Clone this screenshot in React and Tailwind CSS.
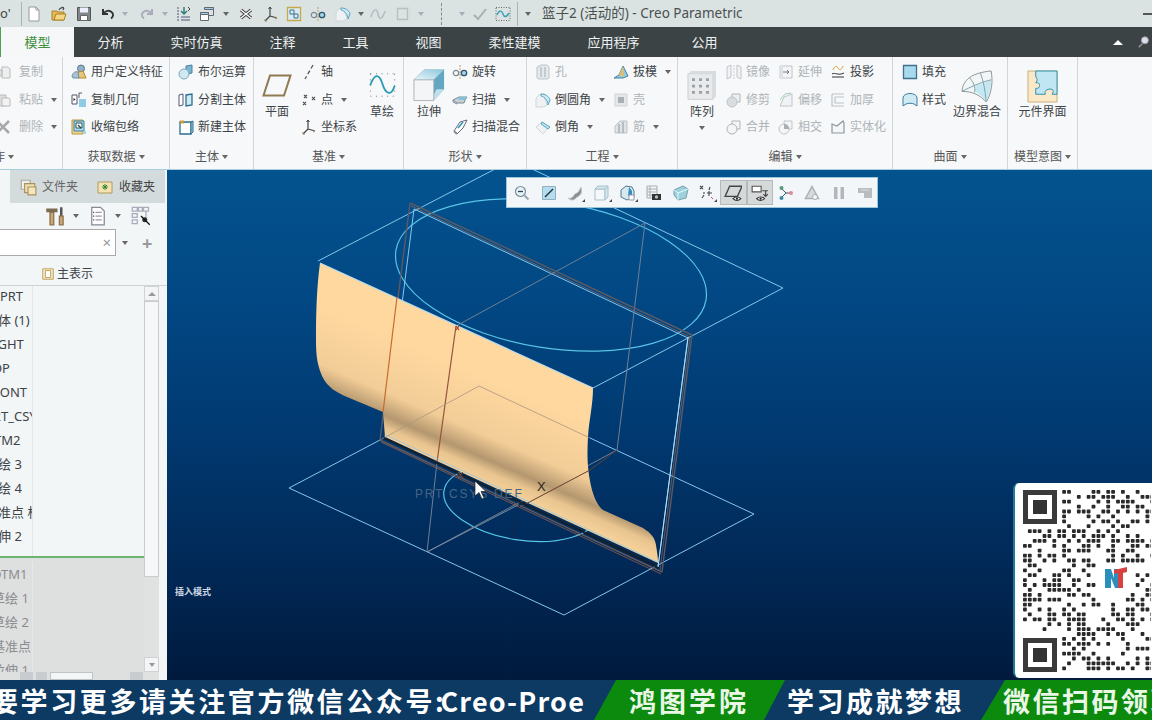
import React from "react";

const Ic = ({ s = 16, children, className = "" }) => (
  <svg width={s} height={s} viewBox="0 0 16 16" fill="none" className={"shrink-0 " + className}>
    {children}
  </svg>
);

const Caret = ({ className = "" }) => (
  <span className={"inline-block h-0 w-0 shrink-0 border-x-[3.5px] border-t-[4px] border-x-transparent border-t-[#666] " + className} />
);

// title bar icons
const NewDoc = () => <Ic><path d="M3 1h7l3 3v11H3z" fill="#fff" stroke="#999" /><path d="M10 1v3h3" stroke="#999" /></Ic>;
const OpenDoc = () => <Ic><path d="M1 5h5l1 1h6v8H1z" fill="#e6b94e" stroke="#a8822c" /><path d="M3 14l2-6h10l-2 6z" fill="#f5d67e" stroke="#a8822c" /><path d="M8 4c1-2 3-3 5-2m0 0l-2-1m2 1l-1 2" stroke="#444" strokeWidth="1.200" /></Ic>;
const SaveDoc = () => <Ic><path d="M1.500 1.500h13v13h-13z" fill="#7f868c" stroke="#555" /><path d="M4 1.500h8v5H4z" fill="#eef" /><path d="M4.500 9.500h7v5h-7z" fill="#fff" stroke="#666" /></Ic>;
const Undo = ({ c = "#333" }) => <Ic><path d="M3 3v5h5" stroke={c} strokeWidth="2" /><path d="M3.500 8C5 4.500 10 3.500 12.500 7c1 1.500 .5 4-1.500 5.500" stroke={c} strokeWidth="2" /></Ic>;
const Redo = ({ c = "#aab" }) => <Ic><path d="M13 3v5H8" stroke={c} strokeWidth="2" /><path d="M12.500 8C11 4.500 6 3.500 3.500 7c-1 1.500-.5 4 1.500 5.500" stroke={c} strokeWidth="2" /></Ic>;
const Regen = () => <Ic><path d="M1 2h2M1 5h2M1 8h2M1 11h2M1 14h2M5 11h9M5 14h9" stroke="#557" /><path d="M8 1v7M5 5l3 3 3-3" stroke="#2f7f7f" strokeWidth="1.500" /><path d="M12 1l2 2-2 2" stroke="#444" /></Ic>;
const Windows = () => <Ic><path d="M1.500 6.500h8v8h-8z" fill="#fff" stroke="#667" /><path d="M5.500 1.500h9v8h-5" stroke="#667" /><path d="M1.500 6.500h8v2h-8zM5.500 1.500h9v2h-9z" fill="#9fd0e0" stroke="#667" /></Ic>;
const CloseX = () => <Ic><path d="M3 4l10 8M13 4L3 12" stroke="#444" strokeWidth="3.500" /><path d="M3 4l10 8M13 4L3 12" stroke="#fff" strokeWidth="1.300" /></Ic>;
const Csys = ({ s = 16 }) => <Ic s={s}><path d="M7 1v9M7 10l7 2M7 10l-5 5" stroke="#444" strokeWidth="1.200" /><path d="M5.500 3L7 1l1.500 2" stroke="#444" /><path d="M2 13v2h2M12 11l2 1-2 1" stroke="#a86" /></Ic>;
const Image = () => <Ic><path d="M1.500 1.500h13v13h-13z" fill="#d9ecf5" stroke="#c9a84a" strokeWidth="1.300" /><path d="M4 4h4v4H4zM8 8h4v4H8z" stroke="#3f6e8e" /></Ic>;
const Revolve = () => <Ic><path d="M8 1v14" stroke="#c09a70" strokeDasharray="2 1" /><circle cx="4" cy="9" r="2.700" stroke="#7a8894" strokeWidth="1.200" /><circle cx="12" cy="9" r="2.700" fill="#9fd6e8" stroke="#33566c" strokeWidth="1.300" /></Ic>;
const Round = () => <Ic><path d="M1 15V8c0-3 3-6 6-6h3l-1 1 3 10-4 2z" fill="#eff2f4" stroke="#d0d6da" /><path d="M6 2c4 0 8 2 9 6l-2 5c0-4-3-8-7-9z" fill="#cfeaf3" stroke="#5aa4bf" /></Ic>;
const Curve = ({ c = "#b5bcc2" }) => <Ic><path d="M1 11C4 1 7 3 8 8s4 7 7-3" stroke={c} strokeWidth="1.500" /></Ic>;
const BoxDash = () => <Ic><path d="M2.500 2.500h10v11h-10z" stroke="#b8bec4" strokeWidth="1.400" /><path d="M5 1h10M15 1v10" stroke="#d4d8dc" strokeDasharray="2 1" /></Ic>;
const Check = () => <Ic><path d="M2 9l4 4 8-10" stroke="#a8afb5" strokeWidth="2" /></Ic>;
const DottedCurve = () => <Ic><path d="M1 2v12M15 2v12M1 1.500h14M1 14.500h14" stroke="#667" strokeDasharray="1 1.500" /><path d="M2 9c3-6 5-4 6-1s3 4 6-1" stroke="#3ca0b8" strokeWidth="1.500" /></Ic>;

// ribbon icons
const CopyI = () => <Ic><path d="M6 3h6l2 2v9H6z" fill="#eee" stroke="#bbb" /><path d="M1 6h5v6H1z" fill="#ddd" stroke="#bbb" /></Ic>;
const PasteI = () => <Ic><path d="M1 3h9v11H1z" fill="#ddd" stroke="#bbb" /><path d="M6 6h7l1 1v7H6z" fill="#f2f2f2" stroke="#bbb" /></Ic>;
const DelI = () => <Ic><path d="M2 2l12 12M14 2L2 14" stroke="#a8a8a8" strokeWidth="2.500" /></Ic>;
const UdfI = () => <Ic><circle cx="10" cy="4.500" r="3.500" fill="#8fb2c8" stroke="#56788e" /><path d="M7 8l5-1 3 7H7z" fill="#e8c878" stroke="#b08a38" /><path d="M1 12c1-4 4-5 6-4l1 6H2z" fill="#a8c4d4" stroke="#6f8fa2" /></Ic>;
const CopyGeom = () => <Ic><path d="M1 3h5v9H1z" fill="#fff" stroke="#556" /><path d="M2.500 6l2 1.500-2 1.500z" fill="#222" /><path d="M8 7h7v8H8z" fill="#8fcde4" /><path d="M8 6V1h3" stroke="#556" /></Ic>;
const Shrink = () => <Ic><path d="M1 1h11v14H1z" fill="#f0d78c" stroke="#b8963c" /><path d="M3 2h10v10H3z" fill="#a9dcee" stroke="#3f7f9e" /><path d="M5 4h6v5H5z" fill="#fff" stroke="#355" /><path d="M7 6l3 3" stroke="#244" strokeWidth="1.300" /><path d="M12 12h3v3h-3z" fill="#9fd6ea" /></Ic>;
const Boolean_ = () => <Ic><path d="M8 2l6-1v8l-6 1z" fill="#79b6d0" stroke="#4a7f9c" /><circle cx="6" cy="10" r="5" fill="#cfe8f2" stroke="#7fa8bc" /></Ic>;
const SplitI = () => <Ic><path d="M1 3l4-1v11l-4 1z" fill="#fff" stroke="#557" /><path d="M8 3l6-1v11l-6 1z" fill="#cfeaf3" stroke="#2d6d8e" strokeWidth="1.300" /></Ic>;
const NewBody = () => <Ic><path d="M2 3h11v12H2z" fill="#fff" stroke="#2d6d8e" strokeWidth="1.300" /><path d="M13 3l2-1v11l-2 2z" fill="#9fd0e4" stroke="#2d6d8e" /><path d="M4 1v4M2 3h4M2.500 1.500l3 3M5.500 1.500l-3 3" stroke="#e0a020" /></Ic>;
const AxisI = () => <Ic><path d="M12 1L4 15" stroke="#555" strokeWidth="1.300" strokeDasharray="4 2.500" /></Ic>;
const PointI = () => <Ic><path d="M3 3l3 3M6 3L3 6M11 5l3 3M14 5l-3 3M2 10l3 3M5 10l-3 3" stroke="#555" strokeWidth="1.100" /></Ic>;
const Plane = () => <svg width="30" height="23" viewBox="0 0 30 24" fill="none" preserveAspectRatio="none"><path d="M8 1.500h20.500L22 22.500H1.500z" stroke="#8f7a52" strokeWidth="2" /></svg>;
const Sketch = () => <svg width="27" height="28" viewBox="0 0 28 30" fill="none"><path d="M1 3h26M1 27h26M1 3v24M27 3v24" stroke="#667" strokeDasharray="1 5" /><path d="M1 15C6 1 11 4 14 14s9 14 13 2" stroke="#2c9ab7" strokeWidth="2" /></svg>;
const Extrude = () => (
  <svg width="32" height="35" viewBox="0 0 34 36" fill="none">
    <defs>
      <linearGradient id="extTop" x1="0" y1="1" x2="1" y2="0">
        <stop offset="0" stopColor="#eaf6fa" />
        <stop offset="1" stopColor="#8cc6dc" />
      </linearGradient>
    </defs>
    <path d="M1 12L12 1h21L22 12z" fill="url(#extTop)" stroke="#a8d0dc" />
    <path d="M22 12L33 1v21L22 34z" fill="#63a7c2" />
    <path d="M22 34l11-12-8 0-3 6z" fill="#bfe0ea" />
    <path d="M1 12h21v22H1z" fill="#f4f5f6" stroke="#aab2b6" />
  </svg>
);
const SweepI = () => <Ic><path d="M1 8l6-3h8l-2 3-1 3H5z" fill="#c8d0d6" stroke="#7a8894" /><path d="M8 5h7l-2 3H6z" fill="#7fc2da" /><path d="M1 8v2l4 2" stroke="#7a8894" /></Ic>;
const BlendI = () => <Ic><path d="M2 12l6-9 7-2-4 8-6 6z" fill="#fff" stroke="#667" /><path d="M6 9l5-6" stroke="#2c9ab7" strokeWidth="1.500" /><path d="M2 12l3 3" stroke="#889" strokeWidth="2" /></Ic>;
const HoleI = () => <Ic><path d="M2 3l4-2h6l2 2v11l-2 1H4l-2-1z" fill="#e6e9eb" stroke="#bcc3c8" /><path d="M6 3v10M10 3v10" stroke="#c4cbd0" strokeWidth="2" /></Ic>;
const Chamfer = () => <Ic><path d="M1 8l6-5 7 5-6 7z" fill="#f0f3f5" stroke="#d0d6da" /><path d="M7 3l8 5-2 2-7-5z" fill="#bfe4f0" stroke="#5aa4bf" /></Ic>;
const Draft = () => <Ic><path d="M1 14l5-3 4-9 5 10-5 2z" fill="#8fcde4" stroke="#4a7f9c" /><path d="M6 11l4-9 1 11z" fill="#e0c070" /></Ic>;
const ShellI = () => <Ic><path d="M2 2h12v12H2z" fill="#e4e7e9" stroke="#cfd4d8" /><path d="M5 5h6v6H5z" fill="#a9afb4" /></Ic>;
const RibI = () => <Ic><path d="M2 14V7l5-5h7v12z" fill="#dfe3e6" stroke="#bcc3c8" /><path d="M6 5v9M10 3v11" stroke="#aab2b8" strokeWidth="1.500" /></Ic>;
const Pattern = () => <svg width="30" height="33" viewBox="0 0 30 36" fill="none" preserveAspectRatio="none"><path d="M1 4h25v28H1z" fill="#e8eaec" stroke="#c8ced2" /><path d="M26 4l3-3v28l-3 3zM1 4l3-3h25l-3 3z" fill="#d8dcdf" /><path d="M5 9h3v3H5zM12 9h3v3h-3zM19 9h3v3h-3zM5 16h3v3H5zM12 16h3v3h-3zM19 16h3v3h-3zM5 23h3v3H5zM12 23h3v3h-3zM19 23h3v3h-3z" fill="#9aa2a8" /></svg>;
const Mirror = () => <Ic><path d="M1 3l4-2v12l-4 2zM15 3l-4-2v12l4 2z" fill="#f0f2f3" stroke="#c0c6ca" /><path d="M8 1v14" stroke="#ccd" strokeDasharray="2 1" /></Ic>;
const Extend = () => <Ic><path d="M2 2h12v12H2z" fill="#f3f5f6" stroke="#c0c6ca" /><path d="M5 8h6M9 6l2 2-2 2" stroke="#777" /><path d="M2 2h3v12H2z" fill="#dde1e4" /></Ic>;
const Project = () => <Ic><path d="M2 13h12M2 10c3-2 6 2 12-1" stroke="#333" /><path d="M3 6c2-5 4-4 5-2s3 3 5-2" stroke="#d8a030" /></Ic>;
const Trim = () => <Ic><path d="M6 2h8v8H6z" fill="#eef1f2" stroke="#aeb5ba" /><circle cx="6" cy="10" r="5" fill="#d9dde0" stroke="#bcc3c8" /></Ic>;
const Offset = () => <Ic><path d="M2 14L6 5l8-3v12z" fill="#f0f2f3" stroke="#c0c6ca" /><path d="M2 8l5-6 6-1" stroke="#9fd0b0" /></Ic>;
const Thicken = () => <Ic><path d="M2 2h12M2 2v12h12M5 5h9M5 5v6h9" stroke="#bcc3c8" strokeWidth="1.200" /></Ic>;
const Merge = () => <Ic><path d="M6 2h8v8H6z" fill="#f3f5f6" stroke="#aeb5ba" /><circle cx="6" cy="10" r="5" fill="#f3f5f6" stroke="#aeb5ba" /></Ic>;
const Intersect = () => <Ic><path d="M6 2h8v8H6z" fill="#f3f5f6" stroke="#c0c6ca" /><path d="M6 5a5 5 0 1 0 0 10 5 5 0 0 0 0-10z" fill="#f3f5f6" stroke="#c0c6ca" /><path d="M6 5a5 5 0 0 1 5 5H6z" fill="#a9afb4" /></Ic>;
const Solidify = () => <Ic><path d="M2 5l5 2 6-5 1 2v10H2z" fill="#f3f5f6" stroke="#8f979d" strokeWidth="1.200" /></Ic>;
const Fill = () => <Ic><path d="M1.500 1.500h13v13h-13z" fill="#a6daec" stroke="#3f6e8e" strokeWidth="1.300" /></Ic>;
const StyleI = () => <Ic><path d="M1 14V6c0-6 14-6 14 0v8l-3-2c-2-1-6-1-8 0z" fill="#cfeaf3" stroke="#3f7f9e" /></Ic>;
const Boundary = () => (
  <svg width="33" height="33" viewBox="0 0 34 34" fill="none">
    <path d="M1 22C2 10 11 3 31 1c2 10 1 22-5 32-6-7-14-11-25-11z" fill="#f2f6f7" stroke="#8a9296" />
    <path d="M15 16c8-2 12-4 16-6 0 8-2 16-5 23-3-5-7-8-12-11z" fill="#c4e8f2" />
    <path d="M9 8c4 5 6 9 5 15M1 22c8-4 18-9 30-12M20 3c3 8 5 18 6 30" stroke="#7fa0ac" />
  </svg>
);
const Puzzle = () => (
  <svg width="31" height="33" viewBox="0 0 32 34" fill="none">
    <path d="M1 1h30v32H1z" fill="#fae8c8" stroke="#c8b078" />
    <path d="M9 1h22v24H26c1-2 2-4 0-5-3-1-6 0-7 2-1 1 0 2 0 3H9v-6c3 0 4-1 4-3s-1-3-4-3c2-2 2-4 0-6z" fill="#bfe6f2" stroke="#2f8fa8" />
  </svg>
);

// sidebar icons
const Folders = () => <Ic s={18}><path d="M2 2h8v8H2z" fill="#eee" stroke="#aa9" /><path d="M5 5h9v8H5z" fill="#f0e0b0" stroke="#a8925c" /><path d="M8 8h7v7H8z" fill="#f5e6c0" stroke="#a8925c" /></Ic>;
const Favorites = () => <Ic s={16}><path d="M1 3h14v11H1z" fill="#f5e2b0" stroke="#b09a60" /><path d="M5 8h6M8 5v6M6 6l4 4M10 6l-4 4" stroke="#2f8a2f" /></Ic>;
const Tools = () => <Ic s={20}><path d="M1 2h9v3H1z" fill="#7a6a50" /><path d="M4 5h3v10H4z" fill="#c9a878" stroke="#8a7048" /><path d="M12 1h2v7h-2z" fill="#555" /><path d="M11.500 8h3v7h-3z" fill="#c9a878" stroke="#8a7048" /></Ic>;
const Doc = () => <Ic s={20}><path d="M3 1h7l3 3v11H3z" fill="#fff" stroke="#889" /><path d="M6 5h5M6 8h5M6 11h5" stroke="#99a" /><path d="M4 5h1M4 8h1M4 11h1" stroke="#556" /></Ic>;
const TreeFilter = () => <Ic s={20}><path d="M1 1h4v3H1zM1 6h4v3H1zM1 11h4v3H1zM6 1h3v3H6zM10 1h4v3h-4zM12 4v6" stroke="#aab" /><circle cx="11" cy="11" r="2" fill="#333" /><path d="M8 8l7 7" stroke="#111" /></Ic>;
const MainRep = () => <Ic s={14}><path d="M2 2h12v12H2z" fill="#f5e9c8" stroke="#b89a50" /><path d="M5 4h6v8H5z" fill="#fff" stroke="#b89a50" /></Ic>;

// floating view toolbar
const VIEW_TOOLS = [
  { icon: <Ic><circle cx="6.500" cy="6.500" r="5" fill="#e6f2f8" stroke="#7a8f9c" strokeWidth="1.200" /><path d="M4 6.500h5" stroke="#345" strokeWidth="1.300" /><path d="M10.500 10.500l4 4" stroke="#9aa6ae" strokeWidth="2" /></Ic> },
  { icon: <Ic><path d="M1.500 1.500h13v13h-13z" fill="#b6dded" stroke="#8fb3c4" /><path d="M4 12L12 4" stroke="#234" strokeWidth="1.500" /></Ic> },
  { icon: <Ic><path d="M1 13c3 1 5-1 6-3s2-1 4-3 2-4 3-5c1 3 1 6-1 8s-3 2-5 4-5 1-7-1z" fill="#8a8f94" stroke="#c8ccd0" /></Ic>, more: true },
  { icon: <Ic><path d="M2 4h10v11H2z" fill="#f4f8fa" stroke="#a8c0cc" /><path d="M2 4l3-3h10l-3 3zM12 4l3-3v11l-3 3z" fill="#d4e8f0" stroke="#a8c0cc" /></Ic>, more: true },
  { icon: <Ic><path d="M1 5l5-4 6 1 2 4v6l-7 3-6-3z" fill="#d6e8f0" stroke="#57788a" /><path d="M9 2l3 4v5H8z" fill="#2f8fc0" /><path d="M9 10h5v5H9z" fill="#fff" stroke="#99a" /></Ic>, more: true },
  { icon: <Ic><path d="M1 1h10v12H1zM1 4h10M1 7h10M1 10h10M4 1v12" stroke="#a8adb2" /><path d="M6 9h9v6H6z" fill="#333" /><circle cx="10.500" cy="12" r="1.700" fill="#bbb" /></Ic> },
  { icon: <Ic><path d="M1 5l9-4 5 3-2 9-8 2-4-5z" fill="#9fd0dc" stroke="#6fa0ae" /><path d="M5 8l10-4M5 8l0 7M5 8L1 5" stroke="#dff" /></Ic> },
  { icon: <Ic><path d="M1 1l3 3M4 1L1 4M11 2l-1 3M5 7v2M3 13l2-3M8 8h5M10 6v5" stroke="#445" strokeWidth="1.100" /><path d="M12 12l2 2" stroke="#b58" /></Ic>, more: true },
  { active: true, icon: <Ic s={18}><path d="M5 2h11l-4 9H1z" stroke="#444" strokeWidth="1.200" /><path d="M8 13c2-2 5-2 7 0-2 2-5 2-7 0z" fill="#fff" stroke="#333" /><circle cx="11.500" cy="13" r="1" fill="#222" /></Ic> },
  { active: true, icon: <Ic s={18}><path d="M1 2h8v5H1z" fill="#fff" stroke="#555" /><path d="M10 6h5M13 6v5M11 9l2 2 2-2" stroke="#444" /><path d="M5 13c2-2 5-2 7 0-2 2-5 2-7 0z" fill="#fff" stroke="#333" /><circle cx="8.500" cy="13" r="1" fill="#222" /></Ic> },
  { icon: <Ic><path d="M3 3l5 5-5 5M8 8h5" stroke="#456" /><circle cx="3.500" cy="3" r="2" fill="#5a9a7a" /><circle cx="3.500" cy="13" r="2" fill="#3f8a9e" /><circle cx="13" cy="8" r="2" fill="#d88a9a" /></Ic> },
  { icon: <Ic><path d="M8 1.500l6.500 12h-13z" fill="#d6dadd" stroke="#aab0b5" strokeWidth="1.500" /><circle cx="11" cy="12" r="2.500" fill="#f3f6f8" stroke="#aab0b5" /></Ic> },
  { icon: <Ic><path d="M3 2h3.500v12H3zM9.500 2H13v12H9.500z" fill="#b0b6bb" /></Ic> },
  { icon: <Ic><path d="M1 3h14v10H7V8H1z" fill="#b6bcc0" /><path d="M4 5h8" stroke="#dde" /></Ic> },
];

const Row = ({ icon, text, off, caret }) => (
  <div className="flex h-[28px] items-center whitespace-nowrap">
    <span className="flex w-[20px] shrink-0 justify-start">{icon}</span>
    <span className={off ? "text-[#aeb4b8]" : "text-[#3d4347]"}>{text}</span>
    {caret && <Caret className="ml-[8px]" />}
  </div>
);

const Big = ({ icon, label, caret, className = "", pad = "" }) => (
  <div className={"flex flex-col items-center " + className}>
    <div className={"flex h-[45px] items-end justify-center " + pad}>{icon}</div>
    <div className="flex h-[18px] items-center whitespace-nowrap text-[#3d4347]">{label}</div>
    {caret && <Caret className="mt-[5px]" />}
  </div>
);

const Group = ({ label, className, children, inner = "", foot = "justify-center" }) => (
  <div className={"flex h-full shrink-0 flex-col border-r border-[#cfd5d8] " + className}>
    <div className={"flex h-[84px] pt-[1px] " + inner}>{children}</div>
    <div className={"flex h-[28px] items-center gap-[3px] pt-[4px] whitespace-nowrap text-[#555] " + foot}>
      {label}
      <Caret />
    </div>
  </div>
);

const TREE_TOP = [
  ["篮子2.PRT", "-ml-[37px]"],
  ["主体 (1)", "-ml-[15px]"],
  ["RIGHT", "-ml-[15px]"],
  ["TOP", "-ml-[15px]"],
  ["FRONT", "-ml-[15px]"],
  ["PRT_CSYS_DEF", "-ml-[15px]"],
  ["DTM2", "-ml-[15px]"],
  ["草绘 3", "-ml-[15px]"],
  ["草绘 4", "-ml-[15px]"],
  ["基准点 标识", "-ml-[15px]"],
  ["拉伸 2", "-ml-[15px]"],
];
const TREE_BOTTOM = ["DTM1", "草绘 1", "草绘 2", "基准点", "拉伸 1"];

const TABS = ["分析", "实时仿真", "注释", "工具", "视图", "柔性建模", "应用程序"];

function QrCode() {
  // pseudo random modules, seeded so every run gives the same picture
  const cells = [];
  let seed = 7321;
  for (let y = 0; y < 37; y++) {
    for (let x = 0; x < 28; x++) {
      seed = (seed * 1103515245 + 12345) & 0x7fffffff;
      const finder = x < 8 && (y < 8 || y > 28);
      const logo = x > 14 && x < 22 && y > 14 && y < 22;
      if (!finder && !logo && (seed >> 16) % 100 < 42) {
        cells.push(<rect key={x + "-" + y} x={x * 4.9} y={y * 4.9} width="3.800" height="3.800" rx="0.800" fill="#2a2a2a" />);
      }
    }
  }
  return (
    <svg width="128" height="182" viewBox="0 0 128 182">
      {cells}
      <path d="M0 0h34v34H0zM5 5v24h24V5zM0 148h34v34H0zM5 153v24h24v-24z" fill="#3a3a3a" fillRule="evenodd" />
      <path d="M10 10h14v14H10zM10 158h14v14H10z" fill="#333" />
      <path d="M82 79v19h6V88l4 10h4V79h-5v9l-3-9z" fill="#2a8fbd" />
      <path d="M91 80l13-3v5l-4 1v15h-5V83l-4 1z" fill="#d8413f" />
    </svg>
  );
}

function Scene() {
  return (
    <svg viewBox="167 170 985 510" className="absolute inset-0 h-full w-full">
      <defs>
        <linearGradient id="skin" gradientUnits="userSpaceOnUse" x1="530" y1="395" x2="487" y2="495">
          <stop offset="0" stopColor="#fed89f" />
          <stop offset="0.5" stopColor="#f3cd97" />
          <stop offset="0.7" stopColor="#b4976f" />
          <stop offset="0.8" stopColor="#e8c48f" />
          <stop offset="1" stopColor="#ffd9a0" />
        </linearGradient>
      </defs>

      <ellipse cx="551" cy="275" rx="157" ry="73" transform="rotate(9 551 275)" stroke="#58c4e6" strokeWidth="1.200" fill="none" />
      <ellipse cx="521" cy="503" rx="78" ry="37" transform="rotate(9 521 503)" stroke="#58c4e6" strokeWidth="1.200" fill="none" />

      <g stroke="#85c6ea" strokeWidth="1" fill="none">
        <path d="M318 261L497 168M530 168L783 288L593 388" />
        <path d="M380 440L289 488L564 615L754 514L590 438" />
        <path d="M414 209L688 338L658 567" />
        <path d="M414 209L385 438" />
      </g>
      <g stroke="#6f7f92" strokeWidth="1" fill="none">
        <path d="M456 326L645 223L617 450L427 552L437 462" />
      </g>
      <path d="M410 203L692 335L662 572" stroke="#5c5a62" strokeWidth="1.400" fill="none" />
      <path d="M411 206L690 337L660 570" stroke="#a8705a" strokeWidth="0.600" fill="none" />
      <path d="M410 203L380 440" stroke="#5c5a62" strokeWidth="1.400" fill="none" />

      <path
        d="M320 263L593 388C593 405 589 420 588 437C587 455 587 470 592 490C595 500 598 506 603 510L643 528C651 533 655 538 656 545C657 552 658 556 658 563L385 437L383 412L347 397C336 392 328 388 322 376C316 362 316 350 316 337C316 310 317 285 320 263Z"
        fill="url(#skin)"
      />
      <path d="M320 263L593 388" stroke="#b9dcec" strokeWidth="1.200" />

      <path d="M397 297L383 412" stroke="#c86a30" strokeWidth="1.200" />
      <path d="M456 326L437 462" stroke="#94543c" strokeWidth="1.200" />
      <path d="M456 326l3 4M459 326l-3 4" stroke="#b03a2a" strokeWidth="1.200" />
      <path d="M479 386L380 440M479 386L590 438" stroke="#a99680" strokeWidth="0.800" fill="none" />
      <path d="M520 507L590 470L617 450" stroke="#6a4030" strokeWidth="1" fill="none" />
      <path d="M427 552L518 505" stroke="#7a8ea2" strokeWidth="1" fill="none" />

      <path d="M384 438L658 567" stroke="#14202c" strokeWidth="2" />
      <path d="M386 435L658 562" stroke="#85c6ea" strokeWidth="0.700" />
      <path d="M380 440L662 572" stroke="#5c5a62" strokeWidth="1.400" />
      <path d="M381 442L661 574" stroke="#c86a40" strokeWidth="0.600" />
      <path d="M658 567L688 337" stroke="#b0dcf4" strokeWidth="1" />

      <path d="M520 503l-8 33" stroke="#1a2a3c" strokeWidth="1" strokeDasharray="4 2" />
      <path d="M458 472l5 6M463 472l-5 6" stroke="#a04a2a" strokeWidth="0.900" />
      <text x="537" y="491" fontSize="13" fill="#2a2620" fontFamily="'Liberation Sans', sans-serif">X</text>
      <text x="415" y="498" fontSize="12" letterSpacing="1.800" fill="#46657f" fontFamily="'Liberation Sans', sans-serif">PRT CSYS DEF</text>
      <path d="M475 481v15l4-3.500 3 6.500 2-1-3-6.500h5z" fill="#fff" stroke="#222" strokeWidth="0.700" />
    </svg>
  );
}

export default function App() {
  return (
    <div className="h-[720px] w-[1152px] overflow-hidden bg-[#f5f7f8] text-[12px] leading-none font-['Noto_Sans','Noto_Sans_CJK_SC',sans-serif]">
      {/* quick access + title */}
      <div className="flex h-[27px] items-center overflow-hidden bg-[#dae3e1]">
        <span className="w-[21px] text-[13px] text-[#444]">o'</span>
        <span className="h-[24px] w-px bg-[#aab3b3]" />
        <span className="ml-[4px] flex"><NewDoc /></span>
        <span className="ml-[9px] flex"><OpenDoc /></span>
        <span className="ml-[9px] flex"><SaveDoc /></span>
        <span className="ml-[8px] flex"><Undo /></span>
        <Caret className="ml-[6px] border-t-[#aab]" />
        <span className="ml-[11px] flex"><Redo /></span>
        <Caret className="ml-[7px] border-t-[#aab]" />
        <span className="ml-[8px] flex"><Regen /></span>
        <span className="ml-[7px] flex"><Windows /></span>
        <Caret className="ml-[8px] border-t-[#333]" />
        <span className="ml-[9px] flex"><CloseX /></span>
        <span className="ml-[9px] flex"><Csys /></span>
        <span className="ml-[7px] flex"><Image /></span>
        <span className="ml-[8px] flex"><Revolve /></span>
        <span className="ml-[9px] flex"><Round /></span>
        <Caret className="ml-[7px] border-t-[#444]" />
        <span className="ml-[6px] flex"><Curve /></span>
        <span className="ml-[9px] flex"><BoxDash /></span>
        <Caret className="ml-[7px] border-t-[#aab]" />
        <span className="ml-[17px] h-[22px] border-l border-dashed border-[#889]" />
        <Caret className="ml-[17px] border-t-[#aab]" />
        <span className="ml-[7px] flex"><Check /></span>
        <span className="ml-[7px] flex"><DottedCurve /></span>
        <span className="ml-[6px] h-[24px] w-px bg-[#aab3b3]" />
        <Caret className="ml-[7px] border-t-[#333]" />
        <span className="ml-[11px] text-[13.500px] whitespace-nowrap text-[#4a5052]">篮子2 (活动的) - Creo Parametric</span>
        <span className="ml-auto h-[2px] w-[9px] bg-[#555]" />
      </div>

      {/* tabs */}
      <div className="flex h-[30px] items-center bg-[#3b4345] text-[13px] text-[#eef1f1]">
        <div className="flex h-full w-[74px] items-center justify-center border-l border-[#4fa34f] bg-[#f5f7f8] text-[#3f8f3f]">模型</div>
        {TABS.map((tab) => (
          <div key={tab} className="px-[23.500px] whitespace-nowrap">{tab}</div>
        ))}
        <div className="ml-[5px] px-[23.500px]">公用</div>
        <span className="ml-auto h-0 w-0 border-x-[5px] border-b-[5px] border-x-transparent border-b-[#fff]" />
        <span className="mr-[1px] ml-[14px] flex">
          <Ic s={14}><circle cx="9" cy="6" r="4" fill="#dde" stroke="#999" /><path d="M6 10l-4 4" stroke="#999" strokeWidth="1.500" /></Ic>
        </span>
      </div>

      {/* ribbon */}
      <div className="flex h-[113px] border-b border-[#a9cfe0] bg-[#f6f8f9] text-[12px]">
        <Group label="操作" className="w-[63px]" inner="justify-end pr-[5px]" foot="-ml-[19px] justify-start">
          <div className="flex w-[58px] flex-col">
            <Row icon={<span className="-ml-[3px]"><CopyI /></span>} text="复制" off />
            <Row icon={<span className="-ml-[3px]"><PasteI /></span>} text="粘贴" off caret />
            <Row icon={<span className="-ml-[4px]"><DelI /></span>} text="删除" off caret />
          </div>
        </Group>
        <Group label="获取数据" className="w-[107px]" inner="pl-[8px]">
          <div className="flex flex-col">
            <Row icon={<UdfI />} text="用户定义特征" />
            <Row icon={<CopyGeom />} text="复制几何" />
            <Row icon={<Shrink />} text="收缩包络" />
          </div>
        </Group>
        <Group label="主体" className="w-[84px]" inner="pl-[8px]">
          <div className="flex flex-col">
            <Row icon={<Boolean_ />} text="布尔运算" />
            <Row icon={<SplitI />} text="分割主体" />
            <Row icon={<NewBody />} text="新建主体" />
          </div>
        </Group>
        <Group label="基准" className="w-[150px]" inner="pl-[8px]">
          <Big icon={<Plane />} label="平面" className="w-[30px]" pad="pb-[6px]" />
          <div className="ml-[9px] flex w-[67px] flex-col">
            <Row icon={<AxisI />} text="轴" />
            <Row icon={<PointI />} text="点" caret />
            <Row icon={<Csys />} text="坐标系" />
          </div>
          <Big icon={<Sketch />} label="草绘" className="w-[28px]" pad="pb-[4px]" />
        </Group>
        <Group label="形状" className="w-[123px]" inner="pl-[8px]">
          <Big icon={<Extrude />} label="拉伸" className="w-[34px]" />
          <div className="ml-[6px] flex flex-col">
            <Row icon={<Revolve />} text="旋转" />
            <Row icon={<SweepI />} text="扫描" caret />
            <Row icon={<BlendI />} text="扫描混合" />
          </div>
        </Group>
        <Group label="工程" className="w-[151px]" inner="pl-[8px]">
          <div className="flex w-[78px] flex-col">
            <Row icon={<HoleI />} text="孔" off />
            <Row icon={<Round />} text="倒圆角" caret />
            <Row icon={<Chamfer />} text="倒角" caret />
          </div>
          <div className="flex flex-col">
            <Row icon={<Draft />} text="拔模" caret />
            <Row icon={<ShellI />} text="壳" off />
            <Row icon={<RibI />} text="筋" off caret />
          </div>
        </Group>
        <Group label="编辑" className="w-[215px]" inner="pl-[9px]">
          <Big icon={<Pattern />} label="阵列" className="w-[30px]" caret />
          <div className="ml-[9px] flex w-[52px] flex-col">
            <Row icon={<Mirror />} text="镜像" off />
            <Row icon={<Trim />} text="修剪" off />
            <Row icon={<Merge />} text="合并" off />
          </div>
          <div className="flex w-[52px] flex-col">
            <Row icon={<Extend />} text="延伸" off />
            <Row icon={<Offset />} text="偏移" off />
            <Row icon={<Intersect />} text="相交" off />
          </div>
          <div className="flex flex-col">
            <Row icon={<Project />} text="投影" />
            <Row icon={<Thicken />} text="加厚" off />
            <Row icon={<Solidify />} text="实体化" off />
          </div>
        </Group>
        <Group label="曲面" className="w-[115px]" inner="pl-[9px]">
          <div className="flex w-[51px] flex-col">
            <Row icon={<Fill />} text="填充" />
            <Row icon={<StyleI />} text="样式" />
          </div>
          <Big icon={<Boundary />} label="边界混合" />
        </Group>
        <Group label="模型意图" className="w-[70px]" inner="justify-center">
          <Big icon={<Puzzle />} label="元件界面" />
        </Group>
      </div>

      <div className="flex h-[510px]">
        {/* model tree */}
        <aside className="flex w-[167px] shrink-0 flex-col bg-[#f3f6f7] text-[#3d4347]">
          <div className="flex h-[33px] shrink-0">
            <div className="w-[10px]" />
            <div className="flex w-[155px] items-center bg-[#d4dbdc]">
              <span className="ml-[9px] flex"><Folders /></span>
              <span className="ml-[5px] text-[#666]">文件夹</span>
              <span className="ml-[19px] flex"><Favorites /></span>
              <span className="ml-[6px] text-[#444]">收藏夹</span>
            </div>
          </div>
          <div className="flex h-[26px] shrink-0 items-center">
            <span className="ml-[45px] flex"><Tools /></span>
            <Caret className="ml-[8px]" />
            <span className="ml-[9px] flex"><Doc /></span>
            <Caret className="ml-[7px]" />
            <span className="ml-[10px] flex"><TreeFilter /></span>
          </div>
          <div className="flex h-[27px] shrink-0 items-center">
            <div className="flex h-full w-[116px] items-center justify-end border border-l-0 border-[#aaa] bg-white pr-[4px] text-[15px] text-[#999]">×</div>
            <Caret className="ml-[6px]" />
            <span className="ml-[14px] text-[18px] font-bold text-[#999]">+</span>
          </div>
          <div className="flex h-[29px] shrink-0 items-center pt-[6px] pl-[41px] text-[12px]">
            <span className="flex"><MainRep /></span>
            <span className="ml-[2px]">主表示</span>
          </div>
          <div className="flex min-h-0 flex-1 border-t border-[#cfd3d5]">
            <div className="flex w-[144px] flex-col overflow-hidden">
              <div className="h-[270px] shrink-0 overflow-hidden text-[13px]">
                <div className="h-full w-[33px] overflow-hidden border-r border-[#e2e6e8]">
                  <div className="-mt-[2px]">
                    {TREE_TOP.map(([name, shift]) => (
                      <div key={name} className={"flex h-[24px] items-center whitespace-nowrap " + shift}>{name}</div>
                    ))}
                  </div>
                </div>
              </div>
              <div className="h-[2px] shrink-0 bg-[#6fb56f]" />
              <div className="min-h-0 flex-1 overflow-hidden bg-[#dedfdf] pt-[4px] text-[13px] text-[#8a8d8f]">
                <div className="h-full w-[33px] overflow-hidden border-r border-[#e6e7e7]">
                  {TREE_BOTTOM.map((name) => (
                    <div key={name} className="-ml-[8px] flex h-[24px] items-center whitespace-nowrap">{name}</div>
                  ))}
                </div>
              </div>
              <div className="flex h-[8px] shrink-0 items-center bg-[#dedfdf]">
                <span className="ml-[20px] h-full w-[13px] bg-[#c8ccce]" />
                <span className="ml-[3px] h-full w-[11px] bg-[#c8ccce]" />
                <span className="ml-[3px] h-full w-[43px] border border-[#c0c4c6] bg-[#f3f6f7]" />
                <span className="ml-[37px] h-full w-[13px] bg-[#c8ccce]" />
              </div>
            </div>
            <div className="flex w-[15px] shrink-0 flex-col bg-[#e0e1e1]">
              <div className="flex h-[15px] shrink-0 items-center justify-center border border-[#d0d3d5] bg-[#f3f5f6]">
                <span className="h-0 w-0 border-x-[4px] border-b-[4px] border-x-transparent border-b-[#999]" />
              </div>
              <div className="h-[276px] shrink-0 border border-[#c8cccf] bg-[#f6f7f8]" />
              <div className="flex-1" />
              <div className="mb-[8px] flex h-[15px] shrink-0 items-center justify-center border border-[#d0d3d5] bg-[#f3f5f6]">
                <Caret className="border-t-[#999]" />
              </div>
            </div>
          </div>
        </aside>

        {/* graphics window */}
        <main className="relative min-w-0 flex-1 overflow-hidden bg-[linear-gradient(180deg,#03538f_0%,#024884_25%,#013a72_50%,#012a59_75%,#001a3d_100%)]">
          <Scene />
          <div className="absolute top-[7px] left-[339px] flex h-[31px] w-[372px] items-center border border-[#9cc6da] bg-[#f2f6f8] pl-[2px]">
            {VIEW_TOOLS.map((tool, i) => (
              <span
                key={i}
                className={
                  "relative flex h-[25px] w-[26.400px] shrink-0 items-center justify-center " +
                  (tool.active ? "border border-[#b5b9bb] bg-[#d6d9da]" : "")
                }
              >
                {tool.icon}
                {tool.more && <span className="absolute right-[3px] bottom-[3px] h-0 w-0 border-b-[3px] border-l-[3px] border-b-[#444] border-l-transparent" />}
              </span>
            ))}
          </div>
          <div className="absolute top-[417px] left-[8px] text-[9px] font-bold text-[#cfd8e4]">插入模式</div>
          <div className="absolute top-[313px] right-0 h-[195px] w-[139px] overflow-hidden rounded-l-[6px] border-l-[2px] border-[#1f7a9a] bg-white pt-[7px] pl-[8px]">
            <QrCode />
          </div>
        </main>
      </div>

      {/* promo strip */}
      <div className="flex h-[40px] items-center overflow-hidden bg-[#0c3a63] text-[27px] font-bold whitespace-nowrap text-white font-['Noto_Sans_CJK_SC',sans-serif]">
        <span className="-ml-[9px] w-[603px] shrink-0 tracking-[2.600px]">
          要学习更多请关注官方微信公众号:<span className="-ml-[6px] tracking-[1.200px]">Creo-Proe</span>
        </span>
        <span className="flex h-full w-[191px] shrink-0 items-center bg-[#0b8a0e] pl-[35px] tracking-[3px] text-[#eaf7e6] [clip-path:polygon(22px_0,100%_0,calc(100%-21px)_100%,0_100%)]">鸿图学院</span>
        <span className="ml-[2px] w-[194px] shrink-0 tracking-[2.500px]">学习成就梦想</span>
        <span className="flex h-full min-w-0 flex-1 items-center overflow-hidden bg-[#0b8a0e] pl-[22px] tracking-[2.500px] text-[#eaf7e6] [clip-path:polygon(24px_0,100%_0,100%_100%,0_100%)]">微信扫码领取</span>
      </div>
    </div>
  );
}
